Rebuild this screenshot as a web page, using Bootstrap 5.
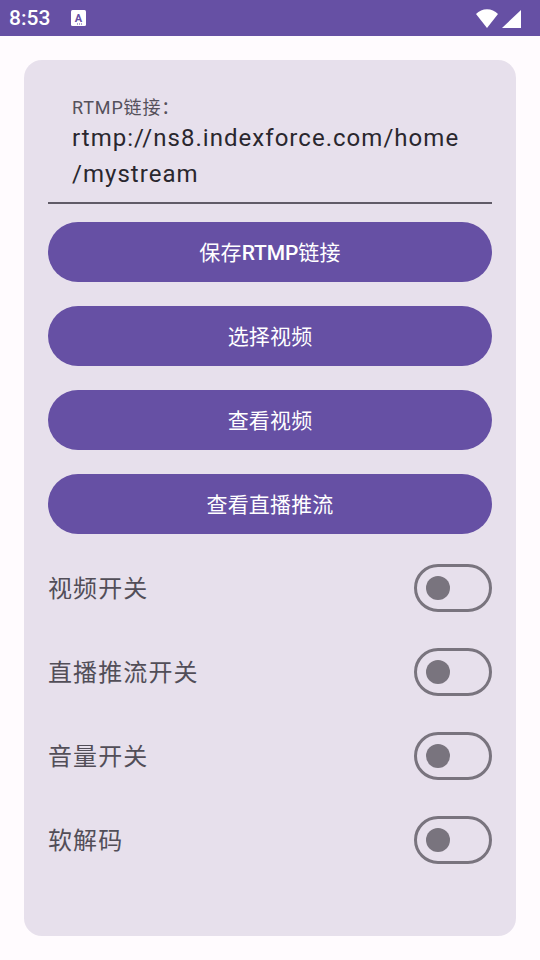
<!DOCTYPE html>
<html lang="zh-CN">
<head>
<meta charset="utf-8">
<title>RTMP</title>
<link href="https://cdn.jsdelivr.net/npm/bootstrap@5.3.0/dist/css/bootstrap.min.css" rel="stylesheet">
<style>
html,body{margin:0;width:540px;height:960px;overflow:hidden;background:#fffbfe;font-family:Roboto,"Noto Sans CJK SC",sans-serif}
.sbar{height:36px;background:#6650a4;color:#fff;padding:0 0 0 9px}
.sbar-time{font-size:21px;font-weight:500;line-height:36px;width:62px}
.sbar-right{margin-left:auto;padding-right:19px;padding-top:1px;gap:4px}
.panel{margin:24px 24px 0;height:876px;background:#e7e0ec;border-radius:18px;padding:24px 24px 0}
.field{border-bottom:2px solid #605b67;padding:10px 24px 0;height:120px}
.field-label{font-size:18px;line-height:27px;letter-spacing:.85px;color:#55515b;height:27px;margin-bottom:-1px}
.field-value{font-size:24px;line-height:36px;letter-spacing:1.03px;color:#2a272e;white-space:nowrap}
.act{display:block;width:100%;height:60px;border:0;border-radius:30px;background:#6650a4;color:#fff;font-size:21px;font-weight:400;padding:3px 0 0;margin-top:24px;letter-spacing:.15px;line-height:57px}
.act:hover,.act:focus{background:#6650a4;color:#fff}
.act b{font-weight:500;letter-spacing:-.1px}
.first{margin-top:18px}
.opt{height:48px;margin-top:36px;color:#524e58;font-size:24px;letter-spacing:1.1px}
.opt.first-opt{margin-top:30px}
.opt-text{line-height:48px;padding-top:1px}
.tog{width:78px;height:48px;border:3px solid #79747e;border-radius:24px;display:flex;align-items:center;padding-left:9px;flex:none}
.tog-dot{width:24px;height:24px;border-radius:50%;background:#79747e}
</style>
</head>
<body>
<div class="sbar d-flex align-items-center">
  <div class="sbar-time">8:53</div>
  <svg width="15" height="16" viewBox="0 0 15 16"><rect width="15" height="16" rx="1.5" fill="#fff"/><text x="7.5" y="11.500" text-anchor="middle" font-family="Roboto" font-weight="700" font-size="11" fill="#6650a4">A</text><path d="M6 13.500h1v1H6zM8 13.500h1v1H8zM10 13.500h1v1h-1z" fill="#6650a4"/></svg>
  <div class="sbar-right d-flex align-items-center">
    <svg width="22" height="19" viewBox="0 0 22 19"><path d="M0 5C3 1.800 6.800.2 11 .2S19 1.800 22 5L11 19z" fill="#fff"/></svg>
    <svg width="19" height="18" viewBox="0 0 19 18"><path d="M19 0V18H0z" fill="#fff"/></svg>
  </div>
</div>
<main class="panel">
  <div class="field">
    <div class="field-label">RTMP链接：</div>
    <div class="field-value">rtmp://ns8.indexforce.com/home</div>
    <div class="field-value">/mystream</div>
  </div>
  <button type="button" class="btn act first">保存<b>RTMP</b>链接</button>
  <button type="button" class="btn act">选择视频</button>
  <button type="button" class="btn act">查看视频</button>
  <button type="button" class="btn act">查看直播推流</button>
  <div class="opt first-opt d-flex justify-content-between"><span class="opt-text">视频开关</span><span class="tog"><span class="tog-dot"></span></span></div>
  <div class="opt d-flex justify-content-between"><span class="opt-text">直播推流开关</span><span class="tog"><span class="tog-dot"></span></span></div>
  <div class="opt d-flex justify-content-between"><span class="opt-text">音量开关</span><span class="tog"><span class="tog-dot"></span></span></div>
  <div class="opt d-flex justify-content-between"><span class="opt-text">软解码</span><span class="tog"><span class="tog-dot"></span></span></div>
</main>
<script src="https://cdn.jsdelivr.net/npm/bootstrap@5.3.0/dist/js/bootstrap.bundle.min.js"></script>
</body>
</html>
